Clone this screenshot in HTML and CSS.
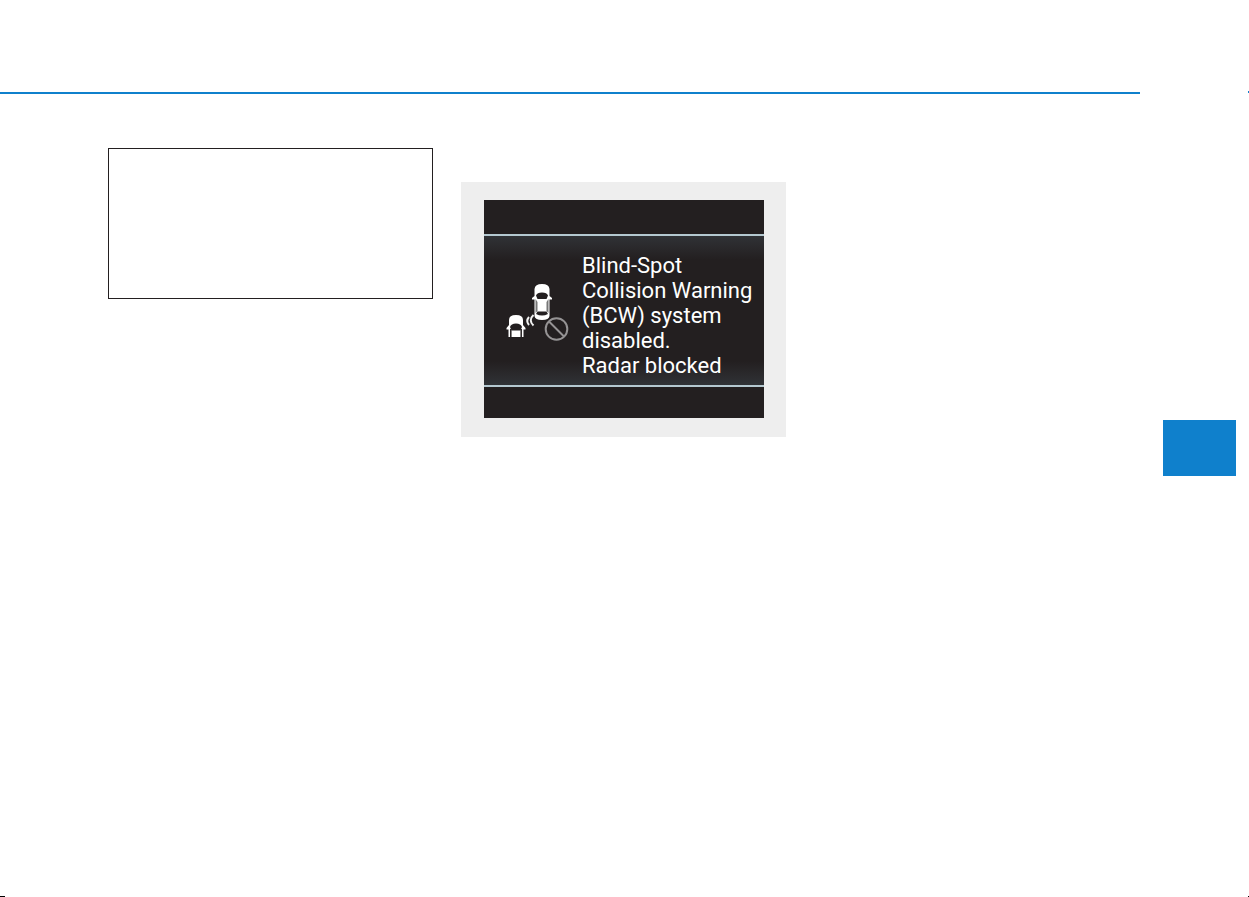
FILE: index.html
```html
<!DOCTYPE html>
<html lang="en">
<head>
    <meta charset="UTF-8">
    <meta name="viewport" content="width=device-width, initial-scale=1.0">
    <title>Blind-Spot Collision Warning</title>
    <link rel="stylesheet" href="styles.css">
</head>
<body>
    <header class="page-header">
        <div class="header-rule"></div>
        <div class="next-rule"></div>
    </header>

    <div class="page-body">
        <main class="columns">
            <section class="note-box"></section>

            <figure class="figure">
                <div class="screen">
                    <div class="message">
                        <svg class="message-icon" viewBox="0 0 66 62" width="66" height="62" aria-hidden="true">
                            <!-- front car -->
                            <path d="M29.500 13V6Q30 1 37 1T44.500 6V13L47 15V16.500H44.500V33Q44 37 37 37T29.500 33V16.500H27V15L29.500 13Z" fill="#fff"/>
                            <path d="M31 12.500Q32 9.500 37 9.500T43 12.500L41.500 16H32.500Z" fill="#231f20"/>
                            <path d="M30.500 16L32.500 19V28L30.500 30ZM43.500 16L41.500 19V28L43.500 30Z" fill="#777"/>
                            <path d="M32.500 28.500H41.500L43 31Q37 34 31 31Z" fill="#231f20"/>
                            <!-- car behind -->
                            <path d="M4 42V37Q4 32 11 32T18 37V42L20.500 45V46.500H18.500V54H3.500V46.500H1.500V45L4 42Z" fill="#fff"/>
                            <path d="M5 44Q6 40.500 11 40.500T17 44L15.500 47.500H6.500Z" fill="#231f20"/>
                            <path d="M5.800 46V54M16.200 46V54" stroke="#231f20" stroke-width="1.500"/>
                            <!-- radar waves -->
                            <path d="M24 34Q20.500 38 24 42M28.500 32Q23 37 28.500 42.500" fill="none" stroke="#f2f2f2" stroke-width="2"/>
                            <!-- blocked sign -->
                            <g fill="none" stroke="#959394" stroke-width="2">
                                <circle cx="51.500" cy="46" r="10.800"/>
                                <path d="M44 38.500L59 53.500"/>
                            </g>
                        </svg>
                        <p class="message-text">Blind-Spot<br>Collision Warning<br>(BCW) system<br>disabled.<br>Radar blocked</p>
                    </div>
                </div>
            </figure>
        </main>

        <aside class="side">
            <div class="chapter-tab"></div>
        </aside>
    </div>

    <footer class="page-footer">
        <div class="mark mark-left"></div>
        <div class="mark"></div>
    </footer>
</body>
</html>
```
FILE: styles.css
```css
body {
    margin: 0;
    min-height: 100vh;
    display: flex;
    flex-direction: column;
    background-color: #fff;
    font-family: Roboto, "Liberation Sans", sans-serif;
}
.page-header {
    display: flex;
    justify-content: space-between;
    padding-top: 91px;
}
.header-rule {
    flex: 1;
    height: 2px;
    margin: 1px 108px 0 0;
    background-color: #0f80cc;
}
.next-rule {
    width: 1px;
    height: 2px;
    background-color: #0f80cc;
}
.page-body {
    flex: 1;
    display: flex;
}
.columns {
    flex: 1;
    display: grid;
    grid-template-columns: repeat(3, 1fr);
    gap: 28px;
    align-items: start;
    padding: 54px 24px 0 108px;
}
.note-box {
    box-sizing: border-box;
    height: 151px;
    border: 1px solid #231f20;
}
.figure {
    margin: 34px 0 0;
    padding: 18px 22px 19px 23px;
    background-color: #eee;
}
.screen {
    padding: 34px 0 31px;
    background-color: #231f20;
}
.message {
    display: flex;
    align-items: flex-start;
    padding: 17px 0 7px 21px;
    gap: 11px;
    border-top: 2px solid #b4c8d0;
    border-bottom: 2px solid #b4c8d0;
    background: linear-gradient(#303236, #231f20 24px, #231f20 calc(100% - 24px), #303236);
}
.message-icon {
    flex: none;
    margin-top: 30px;
}
.message-text {
    margin: 0;
    color: #fff;
    font-size: 22px;
    line-height: 25px;
    white-space: nowrap;
}
.side {
    width: 86px;
    padding-top: 326px;
}
.chapter-tab {
    height: 56px;
    margin-right: 13px;
    background-color: #0f80cc;
}
.page-footer {
    display: flex;
    justify-content: space-between;
}
.mark {
    width: 1px;
    height: 1px;
    background-color: #000;
}
.mark-left {
    width: 5px;
}
```
